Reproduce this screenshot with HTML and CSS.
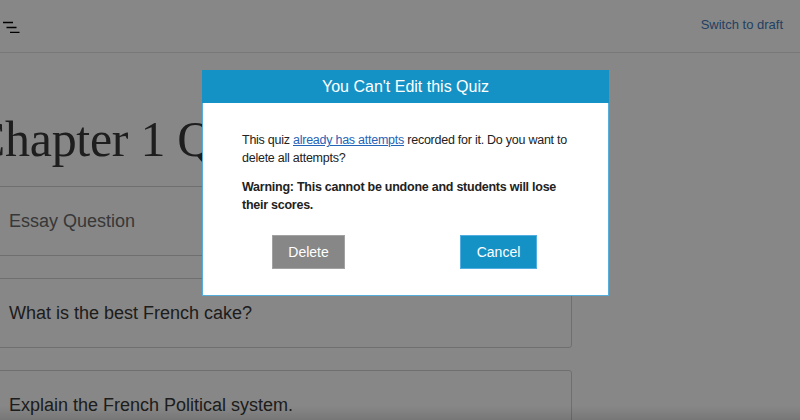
FILE: index.html
```html
<!DOCTYPE html>
<html lang="en">
<head>
<meta charset="utf-8">
<title>Quiz</title>
<link rel="stylesheet" href="styles.css">
</head>
<body>
<header class="topbar">
  <button class="menu" aria-label="Menu">
    <svg width="22" height="16" viewBox="0 0 22 16"><path d="M3 5.5H13M6.5 10.5H16.5M10 15.5H19.5" stroke="#000" stroke-width="1.6" fill="none"/></svg>
  </button>
  <a class="switch" href="#">Switch to draft</a>
</header>
<main class="content">
  <h1 class="title">Chapter 1 Quiz</h1>
  <div class="cards">
    <div class="card card-muted">Essay Question</div>
    <div class="card">What is the best French cake?</div>
    <div class="card">Explain the French Political system.</div>
  </div>
</main>
<div class="footer-shadow"></div>
<div class="overlay">
  <div class="modal" role="dialog">
    <div class="modal-head">You Can't Edit this Quiz</div>
    <div class="modal-body">
      <p>This quiz <a href="#">already has attempts</a> recorded for it. Do you want to delete all attempts?</p>
      <p class="warn">Warning: This cannot be undone and students will lose their scores.</p>
      <div class="actions">
        <button class="btn btn-grey">Delete</button>
        <button class="btn btn-blue">Cancel</button>
      </div>
    </div>
  </div>
</div>
</body>
</html>
```
FILE: styles.css
```css
* { box-sizing: border-box; }
html, body { margin: 0; padding: 0; }
body {
  width: 800px;
  height: 420px;
  overflow: hidden;
  background: #fff;
  font-family: "Liberation Sans", Arial, sans-serif;
  color: #222;
}
.topbar {
  height: 53px;
  border-bottom: 1px solid #e2e2e2;
  display: flex;
  align-items: center;
  justify-content: space-between;
  padding: 0 17px 0 0;
}
.menu {
  border: 0;
  background: none;
  padding: 0;
  margin: 0 0 3px 0;
  width: 22px;
  height: 16px;
  display: block;
}
.menu svg { display: block; }
.switch {
  font-size: 13px;
  color: #3f7bbb;
  text-decoration: none;
  margin-bottom: 3px;
}
.content {
  margin-left: -33px;
}
.title {
  font-family: "Liberation Serif", "Times New Roman", serif;
  font-weight: normal;
  font-size: 50px;
  color: #3a3a3a;
  margin: 0 0 0 5px;
  padding-top: 56px;
  line-height: 60px;
  height: 133px;
  white-space: nowrap;
  letter-spacing: -0.3px;
}
.cards {
  display: flex;
  flex-direction: column;
  gap: 22px;
  width: 605px;
}
.card {
  border: 1px solid #d2d2d2;
  border-radius: 3px;
  height: 70px;
  padding-left: 41px;
  display: flex;
  align-items: center;
  font-size: 18px;
  color: #383838;
}
.card-muted { color: #6a6a6a; }
.footer-shadow {
  position: fixed;
  left: 0; right: 0; bottom: 0;
  height: 14px;
  background: linear-gradient(to bottom, rgba(0,0,0,0), rgba(0,0,0,0.12));
}
.overlay {
  position: fixed;
  inset: 0;
  background: rgba(0,0,0,0.47);
  display: flex;
  justify-content: center;
  align-items: flex-start;
  padding-top: 70px;
}
.modal {
  width: 407px;
  margin-left: 11px;
  background: #fff;
  border: 1px solid #58aedb;
}
.modal-head {
  background: #1592c5;
  color: #fff;
  height: 33px;
  font-size: 16px;
  display: flex;
  align-items: center;
  justify-content: center;
  margin: -1px -1px 0 -1px;
}
.modal-body {
  padding: 28px 30px 26px 39px;
  font-size: 12.5px;
  letter-spacing: -0.25px;
  line-height: 18px;
  color: #222;
}
.modal-body p { margin: 0 0 11px 0; }
.modal-body a { color: #2563b8; }
.warn { font-weight: bold; }
.actions {
  display: flex;
  gap: 115px;
  padding-left: 30px;
  margin-top: 21px;
}
.btn {
  font-family: "Liberation Sans", Arial, sans-serif;
  font-size: 14px;
  color: #fff;
  height: 34px;
  border: 1px solid;
  padding: 0;
  display: flex;
  align-items: center;
  justify-content: center;
}
.btn-grey { background: #878787; border-color: #a2a2a2; width: 73px; }
.btn-blue { background: #1592c5; border-color: #52ade0; width: 77px; }
```
